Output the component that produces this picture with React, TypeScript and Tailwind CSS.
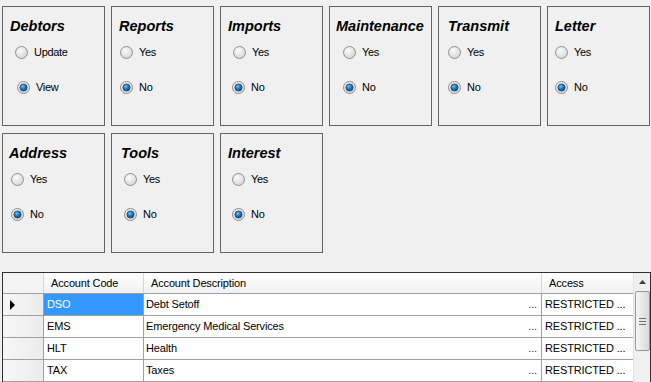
import React from "react";

type Box = {
  title: string;
  a: string;
  b: string;
  titlePad: string;
  padA: string;
  padB: string;
};

const row1: Box[] = [
  { title: "Debtors", a: "Update", b: "View", titlePad: "pl-[7px]", padA: "pl-[12px]", padB: "pl-[14px]" },
  { title: "Reports", a: "Yes", b: "No", titlePad: "pl-[7px]", padA: "pl-[8px]", padB: "pl-[8px]" },
  { title: "Imports", a: "Yes", b: "No", titlePad: "pl-[7px]", padA: "pl-[12px]", padB: "pl-[11px]" },
  { title: "Maintenance", a: "Yes", b: "No", titlePad: "pl-[6px]", padA: "pl-[13px]", padB: "pl-[13px]" },
  { title: "Transmit", a: "Yes", b: "No", titlePad: "pl-[9px]", padA: "pl-[9px]", padB: "pl-[9px]" },
  { title: "Letter", a: "Yes", b: "No", titlePad: "pl-[7px]", padA: "pl-[7px]", padB: "pl-[7px]" },
];

const row2: Box[] = [
  { title: "Address", a: "Yes", b: "No", titlePad: "pl-[6px]", padA: "pl-[8px]", padB: "pl-[8px]" },
  { title: "Tools", a: "Yes", b: "No", titlePad: "pl-[9px]", padA: "pl-[12px]", padB: "pl-[12px]" },
  { title: "Interest", a: "Yes", b: "No", titlePad: "pl-[7px]", padA: "pl-[11px]", padB: "pl-[11px]" },
];

function Radio({ checked }: { checked: boolean }) {
  return (
    <svg width="13" height="13" viewBox="0 0 13 13" className="shrink-0">
      <defs>
        <radialGradient id="rg-off" cx="0.4" cy="0.35" r="0.7">
          <stop offset="0" stopColor="#fbfbfb" />
          <stop offset="1" stopColor="#d4d4d4" />
        </radialGradient>
        <radialGradient id="rg-on" cx="0.4" cy="0.35" r="0.7">
          <stop offset="0" stopColor="#6cc3f2" />
          <stop offset="0.55" stopColor="#1a72b8" />
          <stop offset="1" stopColor="#0b467c" />
        </radialGradient>
      </defs>
      <circle cx="6.5" cy="6.5" r="6" fill="url(#rg-off)" stroke="#8f8f8f" strokeWidth="1" />
      {checked && (
        <circle cx="6.5" cy="6.5" r="3.6" fill="url(#rg-on)" stroke="#1a466c" strokeWidth="0.8" />
      )}
    </svg>
  );
}

function Group({ box }: { box: Box }) {
  return (
    <div className="w-[103px] h-[120px] border border-[#646464] flex flex-col pt-[11px] shrink-0">
      <div
        className={`${box.titlePad} h-[17px] leading-[17px] text-[14.5px] font-bold italic text-black`}
        style={{ fontFamily: '"Liberation Sans", Arial, sans-serif' }}
      >
        {box.title}
      </div>
      <div className={`${box.padA} mt-[10px] h-[14px] flex items-center gap-[6px]`}>
        <Radio checked={false} />
        <span className="text-[11px] tracking-[-0.3px] text-black leading-[14px]">{box.a}</span>
      </div>
      <div className={`${box.padB} mt-[21px] h-[14px] flex items-center gap-[6px]`}>
        <Radio checked={true} />
        <span className="text-[11px] tracking-[-0.3px] text-black leading-[14px]">{box.b}</span>
      </div>
    </div>
  );
}

const rows = [
  { code: "DSO", desc: "Debt Setoff", access: "RESTRICTED ...", selected: true },
  { code: "EMS", desc: "Emergency Medical Services", access: "RESTRICTED ...", selected: false },
  { code: "HLT", desc: "Health", access: "RESTRICTED ...", selected: false },
  { code: "TAX", desc: "Taxes", access: "RESTRICTED ...", selected: false },
];

export default function App() {
  return (
    <div
      className="w-[651px] h-[382px] overflow-hidden bg-[#f0f0f0] pt-[6px] pl-[2px]"
      style={{ fontFamily: '"Liberation Sans", Arial, sans-serif' }}
    >
      <div className="flex gap-[6px]">
        {row1.map((b) => (
          <Group key={b.title} box={b} />
        ))}
      </div>
      <div className="flex gap-[6px] mt-[7px]">
        {row2.map((b) => (
          <Group key={b.title} box={b} />
        ))}
      </div>

      <div className="mt-[19px] w-[649px] h-[120px] border border-[#2f2f2f] bg-white flex text-[11px] tracking-[-0.15px] text-black">
        <div className="w-[630px] flex flex-col">
          {/* header */}
          <div className="h-[21px] flex border-b border-[#a0a0a0] bg-gradient-to-b from-[#ffffff] to-[#f0f1f3]">
            <div className="w-[41px] border-r border-[#d5d5d5] bg-[#f4f4f4]" />
            <div className="w-[100px] border-r border-[#d5d5d5] pl-[7px] flex items-center">Account Code</div>
            <div className="w-[398px] border-r border-[#d5d5d5] pl-[7px] flex items-center">Account Description</div>
            <div className="w-[91px] pl-[7px] flex items-center">Access</div>
          </div>
          {rows.map((r) => (
            <div key={r.code} className="h-[22px] flex border-b border-[#a0a0a0]">
              <div className="w-[41px] border-r border-[#a0a0a0] bg-gradient-to-r from-[#f7f7f7] to-[#ececec] flex items-center pl-[7px]">
                {r.selected && (
                  <svg width="6" height="10" viewBox="0 0 6 10">
                    <path d="M0 0 L5 5 L0 10 Z" fill="#000" />
                  </svg>
                )}
              </div>
              <div
                className={`w-[100px] border-r border-[#a0a0a0] pl-[3px] flex items-center ${
                  r.selected ? "bg-[#3399ff] text-white" : "bg-white"
                }`}
              >
                {r.code}
              </div>
              <div className="w-[398px] border-r border-[#a0a0a0] pl-[2px] pr-[4px] flex items-center justify-between bg-white">
                <span>{r.desc}</span>
                <span className="text-[#333]">...</span>
              </div>
              <div className="w-[91px] pl-[3px] flex items-center bg-white">{r.access}</div>
            </div>
          ))}
        </div>
        {/* scrollbar */}
        <div className="w-[17px] bg-[#f0f0f0] border-l border-[#e3e3e3] flex flex-col items-center">
          <div className="h-[17px] w-full flex items-center justify-center">
            <svg width="7" height="4" viewBox="0 0 7 4">
              <path d="M0 4 L3.5 0 L7 4 Z" fill="#404040" />
            </svg>
          </div>
          <div className="mt-[1px] w-[15px] h-[60px] rounded-[2px] border border-[#979797] bg-gradient-to-r from-[#f6f6f6] to-[#d9d9d9] flex flex-col items-center justify-center gap-[2px]">
            <div className="w-[7px] h-[1px] bg-[#6f6f6f]" />
            <div className="w-[7px] h-[1px] bg-[#6f6f6f]" />
            <div className="w-[7px] h-[1px] bg-[#6f6f6f]" />
          </div>
        </div>
      </div>
    </div>
  );
}
